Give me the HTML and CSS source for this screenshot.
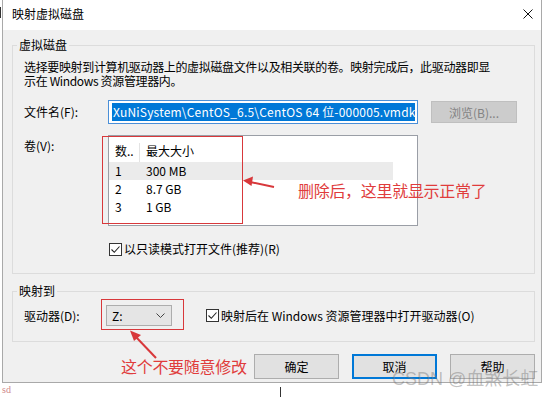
FILE: index.html
```html
<!DOCTYPE html>
<html lang="zh-CN">
<head>
  <meta charset="UTF-8">
  <title>映射虚拟磁盘</title>
  <link rel="stylesheet" href="styles.css">
</head>
<body>
  <div class="screen">
    <div class="window">
      <div class="titlebar">
        <span class="title">映射虚拟磁盘</span>
        <svg class="close" width="10" height="10" viewBox="0 0 10 10"><path d="M0.5 0.5 L9.5 9.5 M9.5 0.5 L0.5 9.5" stroke="#111" stroke-width="1" fill="none"/></svg>
      </div>

      <div class="content">
        <fieldset class="group group-disk">
          <legend>虚拟磁盘</legend>
          <p class="desc">选择要映射到计算机驱动器上的虚拟磁盘文件以及相关联的卷。映射完成后，此驱动器即显<br>示在 Windows 资源管理器内。</p>

          <div class="row row-file">
            <label class="lbl">文件名(F):</label>
            <div class="textbox"><span class="sel">XuNiSystem\CentOS_6.5\CentOS 64 位-000005.vmdk</span></div>
            <button class="btn btn-disabled">浏览(B)...</button>
          </div>

          <div class="row row-vol">
            <label class="lbl lbl-top">卷(V):</label>
            <div class="listbox">
              <div class="lv-head">
                <span class="col1 head-sep">数..</span>
                <span class="col2">最大大小</span>
              </div>
              <div class="lv-row lv-hover"><span class="col1">1</span><span class="col2">300 MB</span></div>
              <div class="lv-row"><span class="col1">2</span><span class="col2">8.7 GB</span></div>
              <div class="lv-row"><span class="col1">3</span><span class="col2">1 GB</span></div>
            </div>
          </div>

          <div class="check-row">
            <span class="checkbox"><svg width="11" height="11" viewBox="0 0 11 11"><path d="M1.5 5.5 L4.3 8.3 L9.5 2.5" stroke="#222" stroke-width="1.1" fill="none"/></svg></span>
            <span>以只读模式打开文件(推荐)(R)</span>
          </div>
        </fieldset>

        <fieldset class="group group-map">
          <legend>映射到</legend>
          <div class="row row-drive">
            <label class="lbl lbl-drive">驱动器(D):</label>
            <div class="combo">
              <span>Z:</span>
              <svg width="9" height="5" viewBox="0 0 9 5"><path d="M0.5 0.5 L4.5 4.5 L8.5 0.5" stroke="#444" stroke-width="1" fill="none"/></svg>
            </div>
            <div class="check-inline">
              <span class="checkbox"><svg width="11" height="11" viewBox="0 0 11 11"><path d="M1.5 5.5 L4.3 8.3 L9.5 2.5" stroke="#222" stroke-width="1.1" fill="none"/></svg></span>
              <span>映射后在 Windows 资源管理器中打开驱动器(O)</span>
            </div>
          </div>
        </fieldset>

        <div class="buttons">
          <button class="btn btn-dlg">确定</button>
          <button class="btn btn-dlg btn-focus">取消</button>
          <button class="btn btn-dlg">帮助</button>
        </div>
      </div>
    </div>

    <!-- annotations drawn on top of the screenshot -->
    <div class="red-box box-list"></div>
    <div class="red-box box-combo"></div>
    <svg class="arrows" width="544" height="397" viewBox="0 0 544 397">
      <path d="M274 187 L250 182" stroke="#d8383b" stroke-width="2" fill="none"/>
      <polygon points="243,180.5 253,176.5 251.5,186" fill="#d8383b"/>
      <path d="M156 358 L136 337" stroke="#d8383b" stroke-width="2" fill="none"/>
      <polygon points="130,330.5 141,335 134,341" fill="#d8383b"/>
    </svg>
    <div class="note note-list">删除后，这里就显示正常了</div>
    <div class="note note-combo">这个不要随意修改</div>

    <div class="watermark">CSDN @血煞长虹</div>
    <span class="sd">sd</span>
    <span class="tick tick-top"></span>
    <span class="tick tick-bottom"></span>
  </div>
</body>
</html>
```

FILE: styles.css
```css
* {
  box-sizing: border-box;
}

body {
  margin: 0;
  background: #fff;
  font-family: "Noto Sans CJK SC", "Noto Sans", sans-serif;
  font-size: 12px;
  color: #000;
}

.screen {
  position: relative;
  width: 544px;
  height: 397px;
  overflow: hidden;
  background: #fff;
}

.window {
  margin-left: 2px;
  width: 540px;
  height: 383px;
  border: 1px solid #a9a9a9;
  border-top: none;
  display: flex;
  flex-direction: column;
}

.titlebar {
  height: 30px;
  flex: none;
  background: #fff;
  display: flex;
  align-items: center;
  justify-content: space-between;
  padding: 0 8px 2px 9px;
}

.title {
  line-height: 16px;
}

.content {
  flex: 1;
  background: #f0f0f0;
  padding: 7px 6px 0 9px;
}

/* group boxes */
.group {
  margin: 0;
  min-width: 0;
  border: 1px solid #dcdcdc;
  padding: 8px 11px 16px 11px;
}

.group legend {
  padding: 0 2px;
  margin-left: -7px;
  line-height: 16px;
}

.group-map {
  margin-top: 9px;
  padding: 6px 11px 15px 11px;
}

.desc {
  margin: -1px 0 12px;
  line-height: 14px;
  letter-spacing: -0.35px;
}

.row {
  display: flex;
  align-items: center;
}

.lbl {
  width: 84px;
  flex: none;
  line-height: 16px;
}

.lbl-top {
  align-self: flex-start;
  margin-top: 3px;
}

.lbl-drive {
  width: 82px;
}

.textbox {
  width: 310px;
  height: 24px;
  border: 1px solid #4a8fd8;
  background: #fff;
  padding: 2px 2px 2px 3px;
  overflow: hidden;
  white-space: nowrap;
}

.sel {
  display: block;
  height: 18px;
  line-height: 18px;
  background: #0078d7;
  color: #fff;
  padding-left: 1px;
  letter-spacing: 0.2px;
  overflow: hidden;
}

.btn {
  font-family: inherit;
  font-size: 12px;
  padding: 0;
  color: #000;
  background: #e1e1e1;
  border: 1px solid #adadad;
  border-radius: 0;
}

.btn-disabled {
  margin-left: 13px;
  width: 86px;
  height: 22px;
  background: #cccccc;
  border-color: #bfbfbf;
  color: #838383;
}

.row-vol {
  margin-top: 11px;
  align-items: flex-start;
}

.listbox {
  width: 310px;
  height: 91px;
  border: 1px solid #9a9ea6;
  background: #fff;
}

.lv-head {
  display: flex;
  height: 26px;
  padding-top: 7px;
}

.col1 {
  width: 31px;
  padding-left: 6px;
  line-height: 16px;
}

.col2 {
  padding-left: 6px;
  line-height: 16px;
}

.head-sep {
  border-right: 1px solid #e3e3e3;
}

.lv-row {
  display: flex;
  align-items: center;
  width: 284px;
  height: 18px;
}

.lv-hover {
  background: #ebebeb;
}

.check-row {
  display: flex;
  align-items: center;
  margin-top: 15px;
  padding-left: 85px;
  line-height: 16px;
}

.checkbox {
  width: 13px;
  height: 13px;
  border: 1px solid #333;
  background: #fff;
  display: inline-flex;
  align-items: center;
  justify-content: center;
  margin-right: 2px;
  flex: none;
}

.combo {
  width: 66px;
  height: 21px;
  background: #e5e5e5;
  border: 1px solid #adadad;
  display: flex;
  align-items: center;
  justify-content: space-between;
  padding: 0 6px 0 5px;
}

.check-inline {
  display: flex;
  align-items: center;
  margin-left: 34px;
  line-height: 16px;
}

.buttons {
  display: flex;
  justify-content: flex-end;
  gap: 13px;
  margin-top: 12px;
}

.btn-dlg {
  width: 85px;
  height: 25px;
}

.btn-focus {
  border: 2px solid #0078d7;
}

/* annotations */
.red-box {
  position: absolute;
  border: 1.5px solid #d8383b;
}

.box-list {
  left: 102px;
  top: 136px;
  width: 141px;
  height: 88px;
}

.box-combo {
  left: 101px;
  top: 299px;
  width: 83px;
  height: 31px;
}

.arrows {
  position: absolute;
  left: 0;
  top: 0;
  pointer-events: none;
}

.note {
  position: absolute;
  color: #e03c3c;
  font-size: 16px;
  line-height: 20px;
  letter-spacing: -0.3px;
  white-space: nowrap;
}

.note-list {
  left: 298px;
  top: 180px;
}

.note-combo {
  left: 121px;
  top: 356px;
}

.watermark {
  position: absolute;
  left: 392px;
  top: 369px;
  font-family: "Liberation Sans", "Noto Sans CJK SC", sans-serif;
  font-size: 18px;
  line-height: 20px;
  color: rgba(120, 120, 120, 0.45);
  white-space: nowrap;
}

.sd {
  position: absolute;
  left: 2px;
  top: 384px;
  font-family: "Liberation Serif", serif;
  font-size: 10px;
  line-height: 12px;
  color: #d08a8a;
}

.tick {
  position: absolute;
  width: 1px;
  background: #333;
}

.tick-top {
  left: 0;
  top: 7px;
  height: 11px;
}

.tick-bottom {
  left: 280px;
  top: 387px;
  height: 10px;
}
```
